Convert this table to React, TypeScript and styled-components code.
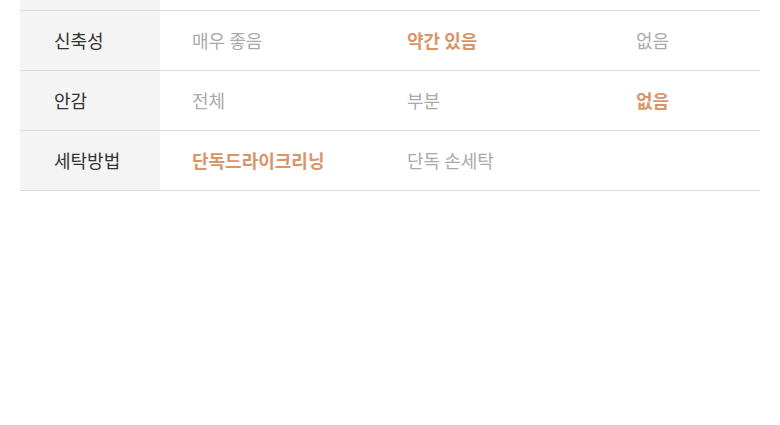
import styled, { createGlobalStyle } from "styled-components";

const GlobalStyle = createGlobalStyle`
  body {
    margin: 0;
    background: #fff;
    font-family: "Noto Sans CJK KR", "Noto Sans", sans-serif;
  }
`;

type Row = { label: string; options: string[]; selected: number };

const ROWS: Row[] = [
  { label: "신축성", options: ["매우 좋음", "약간 있음", "없음"], selected: 1 },
  { label: "안감", options: ["전체", "부분", "없음"], selected: 2 },
  { label: "세탁방법", options: ["단독드라이크리닝", "단독 손세탁"], selected: 0 },
];

export default function App() {
  return (
    <>
      <GlobalStyle />
      <Page>
        <Table>
          {/* tail of the row above, scrolled out of view */}
          <TableRow $height={10}>
            <Label />
            <Option $active={false} />
          </TableRow>
          {ROWS.map((row) => (
            <TableRow key={row.label} $height={59}>
              <Label>{row.label}</Label>
              {[0, 1, 2].map((i) => (
                <Option key={i} $active={i === row.selected}>
                  {row.options[i] ?? ""}
                </Option>
              ))}
            </TableRow>
          ))}
        </Table>
      </Page>
    </>
  );
}

const Page = styled.div`
  height: 425px;
  overflow: hidden;
  padding: 0 20px;
`;

const Table = styled.div`
  display: flex;
  flex-direction: column;
`;

const TableRow = styled.div<{ $height: number }>`
  display: grid;
  grid-template-columns: 140px 215px 229px 1fr;
  height: ${({ $height }) => $height}px;
  border-bottom: 1px solid #dcdcdc;
`;

const Label = styled.div`
  display: flex;
  align-items: center;
  padding: 0 0 2px 34px;
  background: #f4f4f4;
  font-size: 18px;
  color: #333;
`;

const Option = styled.div<{ $active: boolean }>`
  display: flex;
  align-items: center;
  padding: 0 0 2px 32px;
  font-size: 18px;
  font-weight: ${({ $active }) => ($active ? 700 : 400)};
  color: ${({ $active }) => ($active ? "#d9956a" : "#aaa")};
`;
